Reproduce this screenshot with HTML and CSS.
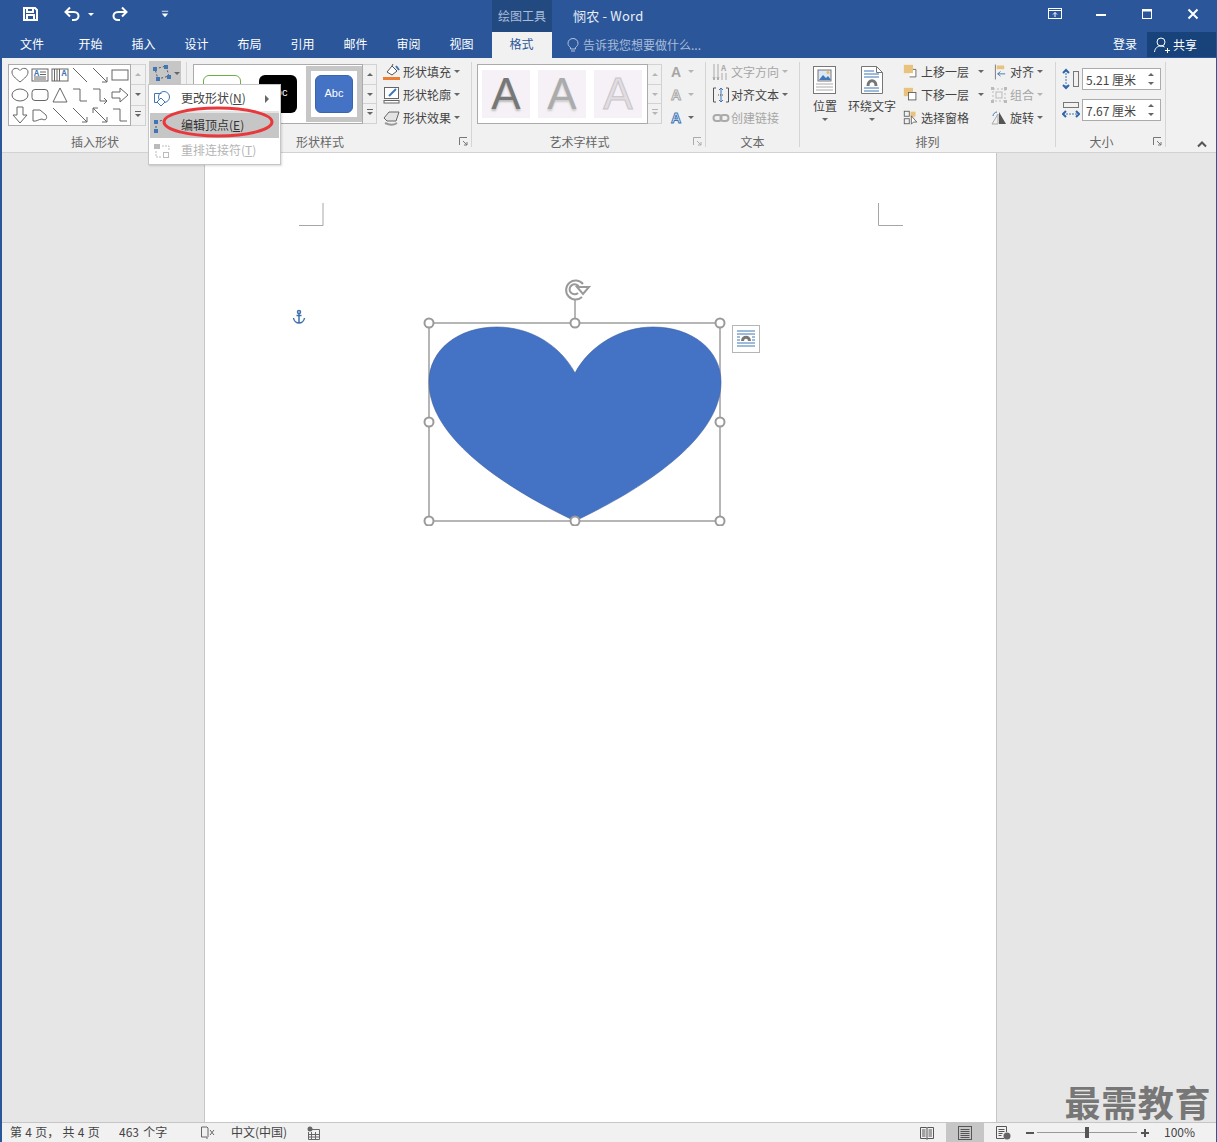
FILE: index.html
```html
<!DOCTYPE html>
<html>
  <head>
    <title>悯农 - Word</title>
    <meta charset="utf-8" />
    <link rel="stylesheet" href="styles.css">
  </head>
  <body>
    <div class="app">
      <div class="titlebar">
        <div class="qat">
          <svg class="qat-save" width="20" height="20" viewBox="0 0 20 20" fill="none" stroke="#fff" stroke-width="2"><path d="M4 4h11l2 2v10H4z"/><path d="M7 4v4h6V4M7 16v-5h7v5"/></svg>
          <svg class="qat-undo" width="20" height="20" viewBox="0 0 20 20" fill="none" stroke="#fff" stroke-width="2"><path d="M4 8h8c6 0 6 8 0 8h-2"/><path d="M8 3.5 3.500 8 8 12.500"/></svg>
          <span class="caret caret-white qat-caret"></span>
          <svg class="qat-redo" width="20" height="20" viewBox="0 0 20 20" fill="none" stroke="#fff" stroke-width="2"><path d="M16 8H8c-6 0-6 8 0 8h2"/><path d="M12 3.500 16.500 8 12 12.500"/></svg>
          <svg class="qat-more" width="8" height="8" viewBox="0 0 10 10" fill="#fff"><rect x="1" y="1" width="8" height="1"/><path d="M1 4.500h8L5 9z"/></svg>
        </div>
        <div class="context-tab">绘图工具</div>
        <div class="doc-title">悯农 - Word</div>
        <div class="win-btns">
          <div class="win-btn"><svg width="14" height="12" viewBox="0 0 14 12" fill="none" stroke="#fff"><rect x=".5" y=".5" width="13" height="10"/><path d="M1 2.500h12M7 9V4.500M5 6.500l2-2 2 2"/></svg></div>
          <div class="win-btn"><svg width="12" height="12" viewBox="0 0 12 12" fill="#fff"><rect x="1" y="6" width="10" height="2"/></svg></div>
          <div class="win-btn"><svg width="12" height="12" viewBox="0 0 12 12" fill="none" stroke="#fff"><rect x="1.500" y="1.500" width="9" height="9"/><path d="M1 2.500h10" stroke-width="2"/></svg></div>
          <div class="win-btn"><svg width="12" height="12" viewBox="0 0 12 12" stroke="#fff" stroke-width="2"><path d="M1.500 1.500l9 9M10.500 1.500l-9 9"/></svg></div>
        </div>
      </div>

      <div class="tabs">
        <div class="tab tab-file">文件</div>
        <div class="tab">开始</div>
        <div class="tab">插入</div>
        <div class="tab">设计</div>
        <div class="tab">布局</div>
        <div class="tab">引用</div>
        <div class="tab">邮件</div>
        <div class="tab">审阅</div>
        <div class="tab">视图</div>
        <div class="tab tab-active">格式</div>
        <div class="tell-me">
          <svg width="14" height="16" viewBox="0 0 14 16" fill="none" stroke="#b4c4dc"><path d="M4.500 10.500C3 9.500 2 8 2 6.200 2 3.500 4.200 1.500 7 1.500s5 2 5 4.700c0 1.800-1 3.300-2.500 4.300v1.500h-5z"/><path d="M5 14h4"/></svg>
          <span>告诉我您想要做什么...</span>
        </div>
        <div class="login">登录</div>
        <div class="share">
          <svg width="18" height="18" viewBox="0 0 18 18" fill="none" stroke="#fff"><circle cx="8" cy="6" r="4"/><path d="M1.500 16c.5-4 3-6 6.500-6 1.500 0 2.500.3 3.500 1M12 14.500h5M14.500 12v5"/></svg>
          <span>共享</span>
        </div>
      </div>

      <div class="ribbon">
        <div class="group group-shapes">
          <div class="group-body">
            <div class="shape-gallery">
              <svg viewBox="0 0 18 18"><path d="M9 16C4 12 1 9.500 1 6c0-4 5.500-5 8-1.500C11.500 1 17 2 17 6c0 3.500-3 6-8 10z"/></svg>
              <svg viewBox="0 0 18 18"><rect x="1" y="3" width="16" height="12"/><path d="M9 6h6M9 8.500h6M3 11h12M3 13h12"/><text x="3" y="10" class="svg-a">A</text></svg>
              <svg viewBox="0 0 18 18"><rect x="1" y="3" width="16" height="12"/><path d="M3.500 3v12M6 3v12M8.500 3v12"/><text x="10.500" y="10" class="svg-a">A</text></svg>
              <svg viewBox="0 0 18 18"><path d="M2 2l14 14"/></svg>
              <svg viewBox="0 0 18 18"><path d="M2 2l14 14M11 16h5v-5"/></svg>
              <svg viewBox="0 0 18 18"><rect x="1" y="4" width="16" height="10"/></svg>
              <svg viewBox="0 0 18 18"><ellipse cx="9" cy="9" rx="8" ry="6"/></svg>
              <svg viewBox="0 0 18 18"><rect x="1" y="3.500" width="16" height="11" rx="3"/></svg>
              <svg viewBox="0 0 18 18"><path d="M9 2l7 14H2z"/></svg>
              <svg viewBox="0 0 18 18"><path d="M2 3h7v12h7"/></svg>
              <svg viewBox="0 0 18 18"><path d="M2 3h7v12h7M13 12l3 3-3 3"/></svg>
              <svg viewBox="0 0 18 18"><path d="M1 6h8V2l8 7-8 7v-4H1z"/></svg>
              <svg viewBox="0 0 18 18"><path d="M6 1h6v8h4l-7 8-7-8h4z"/></svg>
              <svg viewBox="0 0 18 18"><path d="M2 4h7l6 5c2 4-1 6-4 4-3 0-6 3-9 2z"/></svg>
              <svg viewBox="0 0 18 18"><path d="M2 2l14 14"/></svg>
              <svg viewBox="0 0 18 18"><path d="M2 2l14 14M11 16h5v-5"/></svg>
              <svg viewBox="0 0 18 18"><path d="M2 2l14 14M7 2H2v5M11 16h5v-5"/></svg>
              <svg viewBox="0 0 18 18"><path d="M2 3h7v12h7"/></svg>
            </div>
            <div class="scroll scroll-shapes">
              <div class="scroll-btn"><span class="caret caret-up caret-off"></span></div>
              <div class="scroll-btn"><span class="caret"></span></div>
              <div class="scroll-btn"><span class="caret caret-more"></span></div>
            </div>
            <div class="edit-shape-btn">
              <svg width="20" height="18" viewBox="0 0 20 18" fill="none" stroke="#555"><path d="M3 5l11-3 3 10-11 3z" stroke-dasharray="2 2"/><g fill="#3f76b8" stroke="none"><rect x="1" y="3" width="4" height="4"/><rect x="12" y="1" width="4" height="4"/><rect x="15" y="11" width="4" height="4"/><rect x="4" y="13" width="4" height="4"/></g></svg>
              <span class="caret"></span>
            </div>
          </div>
          <div class="group-label">插入形状</div>
        </div>

        <div class="group group-styles">
          <div class="group-body">
            <div class="style-gallery">
              <div class="style-item style-green"></div>
              <div class="style-item style-black">Abc</div>
              <div class="style-frame"><div class="style-item style-blue">Abc</div></div>
            </div>
            <div class="scroll scroll-styles">
              <div class="scroll-btn"><span class="caret caret-up"></span></div>
              <div class="scroll-btn"><span class="caret"></span></div>
              <div class="scroll-btn"><span class="caret caret-more"></span></div>
            </div>
            <div class="cmds">
              <div class="cmd">
                <svg width="18" height="18" viewBox="0 0 18 18" fill="none" stroke="#555"><path d="M4 9l5-6 5 5-5 4z" fill="#fff"/><path d="M9 3l1-2" /><path d="M13 3l3 4" stroke="#3f76b8" stroke-width="2"/><rect x="0" y="14" width="17" height="3" fill="#ed7d31" stroke="none"/></svg>
                <span>形状填充</span><span class="caret"></span>
              </div>
              <div class="cmd">
                <svg width="18" height="18" viewBox="0 0 18 18" fill="none" stroke="#666"><rect x="1.500" y="1.500" width="14" height="11" fill="#fff"/><path d="M6 10l7-7" stroke="#3f76b8" stroke-width="2"/><rect x="1" y="14.500" width="15" height="2.500" fill="#fff"/></svg>
                <span>形状轮廓</span><span class="caret"></span>
              </div>
              <div class="cmd">
                <svg width="18" height="18" viewBox="0 0 18 18" stroke="#666"><path d="M1 9l5-6h10l-3 9H4z" fill="#e4e4e4"/><path d="M2 14c4 2 9 2 12 0" fill="none" stroke="#999" stroke-width="2"/></svg>
                <span>形状效果</span><span class="caret"></span>
              </div>
            </div>
          </div>
          <div class="group-label">形状样式</div>
          <svg class="launcher" width="9" height="9" viewBox="0 0 9 9" fill="none" stroke="#777"><path d="M.5 8V.5H8M4 4l4 4M8 5v3H5"/></svg>
        </div>

        <div class="group group-wordart">
          <div class="group-body">
            <div class="art-gallery">
              <div class="art-item art-dark">A</div>
              <div class="art-item art-mid">A</div>
              <div class="art-item art-light">A</div>
            </div>
            <div class="scroll scroll-art">
              <div class="scroll-btn"><span class="caret caret-up caret-off"></span></div>
              <div class="scroll-btn"><span class="caret caret-off"></span></div>
              <div class="scroll-btn"><span class="caret caret-more caret-off"></span></div>
            </div>
            <div class="art-cmds">
              <div class="art-cmd"><span class="art-a art-a-gray">A</span><span class="caret caret-off"></span></div>
              <div class="art-cmd"><span class="art-a art-a-outline">A</span><span class="caret caret-off"></span></div>
              <div class="art-cmd"><span class="art-a art-a-blue">A</span><span class="caret"></span></div>
            </div>
          </div>
          <div class="group-label">艺术字样式</div>
          <svg class="launcher launcher-off" width="9" height="9" viewBox="0 0 9 9" fill="none" stroke="#aaa"><path d="M.5 8V.5H8M4 4l4 4M8 5v3H5"/></svg>
        </div>

        <div class="group group-text">
          <div class="group-body">
            <div class="cmds">
              <div class="cmd cmd-off">
                <svg width="18" height="18" viewBox="0 0 18 18" fill="none" stroke="#aaa"><path d="M2 1v16M6 1v16M10 10v7M14 10v7M1 14l1 3 1-3M5 14l1 3 1-3"/><text x="9" y="8" class="svg-a svg-a-off">A</text></svg>
                <span>文字方向</span><span class="caret caret-off"></span>
              </div>
              <div class="cmd">
                <svg width="18" height="18" viewBox="0 0 18 18" fill="none" stroke="#555"><path d="M4 2H1.500v14H4M14 2h2.500v14H14"/><path d="M9 2v14M7 4l2-2 2 2M7 14l2 2 2-2" stroke="#3f76b8"/><path d="M6 9h6" stroke-dasharray="1 1"/></svg>
                <span>对齐文本</span><span class="caret"></span>
              </div>
              <div class="cmd cmd-off">
                <svg width="18" height="18" viewBox="0 0 18 18" fill="none" stroke="#aaa" stroke-width="2"><rect x="1.500" y="6" width="8" height="6" rx="3"/><rect x="8.500" y="6" width="8" height="6" rx="3"/></svg>
                <span>创建链接</span>
              </div>
            </div>
          </div>
          <div class="group-label">文本</div>
        </div>

        <div class="group group-arrange">
          <div class="group-body">
            <div class="big-btn big-position">
              <svg width="26" height="30" viewBox="0 0 26 30" fill="#fff" stroke="#777"><rect x="1.500" y="1.500" width="22" height="27"/><rect x="6" y="5" width="13" height="11" fill="#dbe7f4" stroke="#777"/><path d="M7 15l4-5 3 3 2-2 3 4z" fill="#3f76b8" stroke="none"/><circle cx="16" cy="7.500" r="1.500" fill="#e8b960" stroke="none"/><path d="M4 19h17M4 22h17M4 25h17" stroke="#aaa"/></svg>
              <span>位置</span>
              <span class="caret"></span>
            </div>
            <div class="big-btn big-wrap">
              <svg width="24" height="30" viewBox="0 0 24 30" fill="#fff" stroke="#777"><path d="M1.500 1.500h15l6 6v21h-21z"/><path d="M16.500 1.500v6h6" fill="none"/><path d="M4 6h10M4 9h15M4 12h15M4 23h15M4 26h15" stroke="#3f76b8"/><path d="M8 21c0-7 8-7 8 0" fill="none" stroke="#777" stroke-width="3"/></svg>
              <span>环绕文字</span>
              <span class="caret"></span>
            </div>
            <div class="cmds cmds-layer">
              <div class="cmd">
                <svg width="15" height="15" viewBox="0 0 18 18" fill="none" stroke="#555"><path d="M8 6.500h7.500v9H8" fill="#fff"/><rect x="1" y="1" width="11" height="10" fill="#e9c27d" stroke="none"/></svg>
                <span>上移一层</span><span class="caret caret-far"></span>
              </div>
              <div class="cmd">
                <svg width="15" height="15" viewBox="0 0 18 18" fill="none" stroke="#555"><rect x="1" y="1" width="11" height="10" fill="#e9c27d" stroke="none"/><rect x="6.500" y="6.500" width="9" height="9" fill="#fff"/></svg>
                <span>下移一层</span><span class="caret caret-far"></span>
              </div>
              <div class="cmd">
                <svg width="15" height="15" viewBox="0 0 18 18" fill="none" stroke="#555"><rect x="1.500" y="1.500" width="6" height="6"/><rect x="1.500" y="10.500" width="6" height="6"/><rect x="9" y="2" width="6" height="6" fill="#e9c27d" stroke="none"/><path d="M10 7v10l2.500-2.500h4z" fill="#fff"/></svg>
                <span>选择窗格</span>
              </div>
            </div>
            <div class="cmds cmds-align">
              <div class="cmd">
                <svg width="13" height="18" viewBox="0 0 14 18" fill="none" stroke="#777"><path d="M1.500 1v16"/><rect x="3" y="2" width="8" height="4" fill="#e9c27d" stroke="none"/><path d="M12 11H4M7 8.500 4 11l3 2.500" stroke="#3f76b8"/></svg>
                <span>对齐</span><span class="caret"></span>
              </div>
              <div class="cmd cmd-off">
                <svg class="ic-wide" width="16" height="18" viewBox="0 0 16 18" fill="none" stroke="#bbb"><rect x="2" y="3" width="12" height="12" stroke-dasharray="2 2"/><rect x="5" y="6" width="6" height="6"/><g fill="#bbb" stroke="none"><rect x="0" y="1" width="3" height="3"/><rect x="13" y="1" width="3" height="3"/><rect x="0" y="14" width="3" height="3"/><rect x="13" y="14" width="3" height="3"/></g></svg>
                <span>组合</span><span class="caret caret-off"></span>
              </div>
              <div class="cmd">
                <svg class="ic-wide" width="16" height="18" viewBox="0 0 16 18" fill="none" stroke="#aaa"><path d="M1 15L7 5v10z"/><path d="M8 15V3l7 12z" fill="#555" stroke="none"/><path d="M2 7c0-2 2-4 4-4" stroke="#3f76b8"/></svg>
                <span>旋转</span><span class="caret"></span>
              </div>
            </div>
          </div>
          <div class="group-label">排列</div>
        </div>

        <div class="group group-size">
          <div class="group-body">
            <div class="size-rows">
              <div class="size-row">
                <svg width="18" height="22" viewBox="0 0 18 22" fill="none" stroke="#777"><rect x="11.500" y="3.500" width="5" height="15"/><path d="M4 2v18" stroke="#3f76b8" stroke-dasharray="2 1"/><path d="M1 5l3-3 3 3M1 17l3 3 3-3" stroke="#2f66a8" stroke-width="2"/></svg>
                <div class="size-input">
                  <span>5.21 厘米</span>
                  <div class="spin"><span class="caret caret-up"></span><span class="caret"></span></div>
                </div>
              </div>
              <div class="size-row">
                <svg width="18" height="22" viewBox="0 0 18 22" fill="none" stroke="#777"><rect x="1.500" y="3.500" width="15" height="5"/><path d="M1 15h16" stroke="#3f76b8" stroke-dasharray="2 1"/><path d="M4 12l-3 3 3 3M14 12l3 3-3 3" stroke="#2f66a8" stroke-width="2"/></svg>
                <div class="size-input">
                  <span>7.67 厘米</span>
                  <div class="spin"><span class="caret caret-up"></span><span class="caret"></span></div>
                </div>
              </div>
            </div>
          </div>
          <div class="group-label">大小</div>
          <svg class="launcher" width="9" height="9" viewBox="0 0 9 9" fill="none" stroke="#777"><path d="M.5 8V.5H8M4 4l4 4M8 5v3H5"/></svg>
        </div>

        <svg class="collapse" width="12" height="8" viewBox="0 0 12 8" fill="none" stroke="#555" stroke-width="2"><path d="M2 6.500l4-4 4 4"/></svg>
      </div>

      <div class="workspace">
        <div class="page">
          <svg class="crop crop-left" width="25" height="24" viewBox="0 0 25 24" fill="none" stroke="#a6a6a6"><path d="M24 0v22.500H0"/></svg>
          <svg class="crop crop-right" width="25" height="24" viewBox="0 0 25 24" fill="none" stroke="#a6a6a6"><path d="M.5 0v22.500H25"/></svg>
          <svg class="anchor" width="14" height="16" viewBox="0 0 14 16" fill="none" stroke="#3f6fae" stroke-width="1.500"><circle cx="7" cy="3" r="1.500"/><path d="M7 4.500V14M4.500 6.500h5M1.500 9c.5 3 3 5 5.500 5s5-2 5.500-5"/></svg>

          <svg class="heart" width="310" height="260" viewBox="0 0 310 260" fill="none">
            <path d="M156 57V34" stroke="#8f8f8f" stroke-width="1.300"/>
            <rect x="10" y="57" width="291" height="198" stroke="#8f8f8f" stroke-width="1.300"/>
            <path d="M156 107C141 79 111 61 78 61 39 61 10 84 10 116c0 58 81 108 146 139 65-31 146-81 146-139 0-32-29-55-68-55-32 0-63 18-78 46z" fill="#4472c4" stroke="#3a5f9e" stroke-width=".6"/>
            <g fill="#fff" stroke="#9a9a9a" stroke-width="2">
              <circle cx="10" cy="57" r="4.500"/><circle cx="156" cy="57" r="4.500"/><circle cx="301" cy="57" r="4.500"/>
              <circle cx="10" cy="156" r="4.500"/><circle cx="301" cy="156" r="4.500"/>
              <circle cx="10" cy="255" r="4.500"/><circle cx="156" cy="255" r="4.500"/><circle cx="301" cy="255" r="4.500"/>
            </g>
            <g stroke="#9a9a9a" stroke-width="2">
              <path d="M164 18a9.500 9.500 0 1 0-1 13"/>
              <path d="M160 21a5 5 0 1 0-1 6"/>
              <path d="M158 21h12l-6 7z" fill="#fff"/>
            </g>
          </svg>

          <div class="layout-btn">
            <svg width="22" height="22" viewBox="0 0 22 22" fill="none" stroke="#3f76b8"><path d="M2 3h18M2 6h18M2 9h3M17 9h3M2 12h3M17 12h3M2 15h18M2 18h18"/><path d="M7.500 13c0-5 7-5 7 0" stroke="#777" stroke-width="3"/></svg>
          </div>
        </div>
        <div class="watermark">最需教育</div>
      </div>

      <div class="statusbar">
        <span class="st-pages">第 4 页， 共 4 页</span>
        <span class="st-words">463 个字</span>
        <svg class="st-proof" width="15" height="15" viewBox="0 0 15 15" fill="none" stroke="#666"><path d="M7 2H1.500v10H7V14M7 2l1 1v9"/><path d="M10 5l4 5M14 5l-4 5"/></svg>
        <span class="st-lang">中文(中国)</span>
        <svg class="st-macro" width="14" height="14" viewBox="0 0 14 14" fill="none" stroke="#666"><circle cx="3" cy="3" r="2.500" fill="#666" stroke="none"/><path d="M5 3.500h7.500v10h-11V6M1.500 8.500h11M1.500 11h11M4.500 6v7.500M8.500 6v7.500"/></svg>
        <div class="st-right">
          <div class="view-btn">
            <svg width="14" height="14" viewBox="0 0 14 14" fill="none" stroke="#555"><path d="M.5 1.500h6l.5 1 .5-1h6v11h-6l-.5 1-.5-1h-6zM7 2.500v10M2 4h3.500M2 6h3.500M2 8h3.500M2 10h3.500M8.500 4H12M8.500 6H12M8.500 8H12M8.500 10H12"/></svg>
          </div>
          <div class="view-btn view-btn-on">
            <svg width="14" height="14" viewBox="0 0 14 14" fill="none" stroke="#555"><rect x=".5" y=".5" width="13" height="13"/><path d="M2.500 3.500h9M2.500 5.500h9M2.500 7.500h9M2.500 9.500h9M2.500 11.500h9"/></svg>
          </div>
          <div class="view-btn">
            <svg width="15" height="14" viewBox="0 0 15 14" fill="none" stroke="#555"><path d="M8 12.500H.5V.5h10V6M2.500 3.500h6M2.500 5.500h6M2.500 7.500h4M2.500 9.500h3"/><circle cx="11" cy="10" r="3.500" fill="#666" stroke="none"/></svg>
          </div>
          <div class="zoom-minus"></div>
          <div class="zoom-track"><div class="zoom-thumb"></div></div>
          <div class="zoom-plus"></div>
          <span class="zoom-pct">100%</span>
        </div>
      </div>

      <div class="menu">
        <div class="menu-item">
          <svg width="18" height="18" viewBox="0 0 18 18" fill="none" stroke="#3f76b8"><circle cx="11" cy="7" r="5.500"/><path d="M1.500 3.500h7" /><path d="M1.500 3.500v9h3"/><path d="M8 8l4 4-4 4-4-4z" fill="#fff"/></svg>
          <span class="menu-text">更改形状(<u>N</u>)</span>
          <span class="menu-arrow"></span>
        </div>
        <div class="menu-sep"></div>
        <div class="menu-item menu-item-on">
          <svg width="18" height="18" viewBox="0 0 18 18" fill="none" stroke="#555"><path d="M3 5l11-3M3 5v9" stroke-dasharray="2 2"/><g fill="#3f76b8" stroke="none"><rect x="1" y="3" width="4" height="4"/><rect x="1" y="12" width="4" height="4"/></g></svg>
          <span class="menu-text">编辑顶点(<u>E</u>)</span>
        </div>
        <div class="menu-item menu-item-off">
          <svg width="18" height="18" viewBox="0 0 18 18" fill="none" stroke="#bbb"><rect x="1" y="2" width="6" height="5" fill="#bbb" stroke="none"/><path d="M9 4h7v4M3 9v6h6" stroke-dasharray="2 1"/><rect x="10.500" y="10.500" width="5" height="5"/></svg>
          <span class="menu-text">重排连接符(<u>T</u>)</span>
        </div>
      </div>
      <svg class="red-ring" width="114" height="34" viewBox="0 0 114 34" fill="none"><ellipse cx="57" cy="16" rx="54" ry="14" stroke="#e9383c" stroke-width="3"/></svg>
    </div>
  </body>
</html>
```

FILE: styles.css
```css
* {
  box-sizing: border-box;
}

body {
  margin: 0;
  font-family: "Noto Sans CJK SC", "Noto Sans", sans-serif;
  font-size: 12px;
  color: #444;
}

.app {
  position: relative;
  display: flex;
  flex-direction: column;
  width: 1217px;
  height: 1142px;
  overflow: hidden;
  border-left: 2px solid #2b579a;
  border-right: 1px solid #2b579a;
  background: #e6e6e6;
}

/* carets */
.caret {
  display: inline-block;
  width: 0;
  height: 0;
  border-left: 3px solid transparent;
  border-right: 3px solid transparent;
  border-top: 3px solid #666;
}

.caret-up {
  border-top: none;
  border-bottom: 3px solid #666;
}

.caret-off {
  border-top-color: #b5b5b5;
  border-bottom-color: #b5b5b5;
}

.caret-white {
  border-top-color: #fff;
}

.caret-more {
  position: relative;
}

.caret-more::before {
  content: "";
  position: absolute;
  top: -6px;
  left: -3px;
  width: 6px;
  height: 1px;
  background: #666;
}

.caret-more.caret-off::before {
  background: #b5b5b5;
}

/* title bar */
.titlebar {
  display: flex;
  flex: 0 0 32px;
  background: #2b579a;
  color: #fff;
}

.qat {
  display: flex;
  flex: 0 0 490px;
  align-items: center;
  padding-left: 18px;
  height: 28px;
}

.qat-undo {
  margin-left: 22px;
}

.qat-caret {
  margin-left: 6px;
}

.qat-redo {
  margin-left: 16px;
}

.qat-more {
  margin-left: 31px;
}

.context-tab {
  flex: 0 0 60px;
  background: #234a80;
  color: #a9bcd8;
  text-align: center;
  line-height: 31px;
}

.doc-title {
  padding-left: 21px;
  line-height: 31px;
  font-size: 13px;
  letter-spacing: 0.2px;
  color: #e8eef6;
}

.win-btns {
  display: flex;
  margin-left: auto;
  padding-bottom: 4px;
}

.win-btn {
  display: flex;
  align-items: center;
  justify-content: center;
  width: 46px;
}

/* tabs */
.tabs {
  display: flex;
  flex: 0 0 26px;
  background: #2b579a;
  color: #fff;
  line-height: 24px;
}

.tab {
  width: 53px;
  text-align: center;
}

.tab-file {
  width: 60px;
  margin-right: 2px;
}

.tab-active {
  width: 60px;
  margin-left: 4px;
  padding-right: 1px;
  background: #f1f1f1;
  color: #2b579a;
}

.tell-me {
  display: flex;
  align-items: center;
  gap: 3px;
  padding-left: 14px;
  color: #a9bcd8;
}

.login {
  margin-left: auto;
  margin-right: 10px;
}

.share {
  display: flex;
  align-items: center;
  gap: 2px;
  width: 69px;
  height: 25px;
  padding-left: 6px;
  background: #17427a;
}

/* ribbon */
.ribbon {
  display: flex;
  flex: 0 0 95px;
  padding-top: 4px;
  background: #f1f1f1;
  border-bottom: 1px solid #d2d2d2;
}

.group {
  position: relative;
  display: flex;
  flex-direction: column;
  height: 85px;
  border-right: 1px solid #d5d5d5;
}

.group-shapes {
  width: 185px;
}

.group-styles {
  width: 285px;
}

.group-wordart {
  width: 234px;
}

.group-text {
  width: 94px;
}

.group-arrange {
  width: 256px;
}

.group-size {
  width: 110px;
}

.group-body {
  display: flex;
  flex: none;
  align-items: flex-start;
  height: 73px;
}

.group-label {
  flex: none;
  padding-right: 18px;
  color: #666;
  text-align: center;
  line-height: 14px;
}

.group-shapes .group-label {
  padding: 0 0 0 2px;
}

.group-text .group-label,
.group-arrange .group-label {
  padding-right: 0;
}

.launcher {
  position: absolute;
  right: 3px;
  bottom: 1px;
}

.collapse {
  align-self: flex-start;
  margin: 78px 0 0 30px;
}

/* galleries */
.shape-gallery {
  display: grid;
  grid-template-columns: repeat(6, 20px);
  grid-auto-rows: 20px;
  justify-content: center;
  align-content: center;
  width: 123px;
  height: 62px;
  margin: 2px 0 0 6px;
  background: #fff;
  border: 1px solid #ababab;
}

.shape-gallery svg {
  width: 18px;
  height: 18px;
  margin: 1px;
  fill: none;
  stroke: #666;
}

.svg-a {
  font-size: 8px;
  font-weight: 700;
  fill: #3f76b8;
  stroke: none;
}

.svg-a-off {
  fill: #aaa;
}

.scroll {
  display: flex;
  flex-direction: column;
  flex: 0 0 15px;
  margin-top: 2px;
}

.scroll-shapes {
  height: 62px;
}

.scroll-styles,
.scroll-art {
  flex-basis: 14px;
  height: 60px;
}

.scroll-btn {
  display: flex;
  flex: 1;
  align-items: center;
  justify-content: center;
  border: 1px solid #d2d2d2;
  border-left: none;
}

.scroll-btn + .scroll-btn {
  border-top: none;
}

.edit-shape-btn {
  display: flex;
  align-items: center;
  gap: 2px;
  width: 32px;
  height: 24px;
  margin: -1px 0 0 3px;
  padding-left: 3px;
  background: #c6c6c6;
}

.style-gallery {
  display: flex;
  align-items: center;
  width: 170px;
  height: 60px;
  margin: 2px 0 0 6px;
  padding-left: 9px;
  background: #fff;
  border: 1px solid #ababab;
}

.style-item {
  width: 38px;
  height: 38px;
  border-radius: 6px;
  font-family: "Liberation Sans", sans-serif;
  font-size: 11px;
  line-height: 34px;
  text-align: center;
  color: #fff;
}

.style-green {
  border: 1px solid #70ad47;
}

.style-black {
  margin-left: 18px;
  background: #000;
}

.style-frame {
  margin-left: 9px;
  padding: 4px;
  border: 5px solid #c6c6c6;
}

.style-blue {
  background: #4472c4;
  border: 1px solid #3a64ad;
}

.art-gallery {
  display: flex;
  gap: 8px;
  align-items: center;
  width: 171px;
  height: 60px;
  margin: 2px 0 0 5px;
  padding-left: 4px;
  background: #fff;
  border: 1px solid #ababab;
}

.art-item {
  width: 48px;
  height: 48px;
  background: #f5f1f6;
  font-family: "Liberation Sans", sans-serif;
  font-size: 44px;
  line-height: 48px;
  text-align: center;
}

.art-dark {
  color: #777;
  text-shadow: 0 2px 2px #bbb;
}

.art-mid {
  color: #ababab;
  text-shadow: 0 2px 2px #ccc;
}

.art-light {
  color: #e2dde2;
  -webkit-text-stroke: 1px #c9c5c9;
}

.art-cmds {
  display: flex;
  flex-direction: column;
  margin: -2px 0 0 6px;
}

.art-cmd {
  display: flex;
  align-items: center;
  gap: 5px;
  height: 23px;
  padding-left: 1px;
}

.art-a {
  width: 14px;
  font-family: "Liberation Sans", sans-serif;
  font-size: 14px;
  font-weight: 700;
  text-align: center;
}

.art-a-gray {
  color: #a6a6a6;
}

.art-a-outline {
  color: #f1f1f1;
  -webkit-text-stroke: 1px #aaa;
}

.art-a-blue {
  color: #fff;
  -webkit-text-stroke: 1px #3f76b8;
}

/* command rows */
.cmds {
  display: flex;
  flex-direction: column;
  margin: -2px 0 0 6px;
}

.cmd {
  display: flex;
  align-items: center;
  height: 23px;
  white-space: nowrap;
}

.cmd svg {
  flex: none;
  margin-right: 2px;
}

.cmd .caret {
  margin-left: 3px;
}

.cmd-off {
  color: #a6a6a6;
}

.group-text .cmd svg {
  margin-right: 1px;
}

.cmds-layer {
  margin-left: 7px;
}

.cmds-layer .cmd svg {
  margin-right: 3px;
}

.cmds-layer .caret-far {
  margin-left: 9px;
}

.cmds-align {
  margin-left: 10px;
}

.cmds-align .cmd svg {
  margin-right: 3px;
}

.cmds-align .ic-wide {
  margin-left: -3px;
}

.big-btn {
  display: flex;
  flex-direction: column;
  align-items: center;
  margin-top: 3px;
}

.big-btn span {
  margin-top: 3px;
  line-height: 16px;
}

.big-btn .caret {
  margin-top: 4px;
  line-height: 0;
}

.big-position {
  width: 26px;
  margin-left: 12px;
}

.big-wrap {
  width: 48px;
  margin-left: 10px;
}

/* size group */
.size-rows {
  display: flex;
  flex-direction: column;
  gap: 9px;
  margin: 6px 0 0 6px;
}

.size-row {
  display: flex;
  align-items: center;
  gap: 2px;
}

.size-input {
  display: flex;
  align-items: center;
  justify-content: space-between;
  width: 79px;
  height: 22px;
  padding: 0 6px 0 3px;
  background: #fff;
  border: 1px solid #ababab;
}

.spin {
  display: flex;
  flex-direction: column;
  gap: 6px;
}

/* document */
.workspace {
  position: relative;
  flex: 1;
  padding-left: 202px;
}

.page {
  position: relative;
  width: 793px;
  height: 100%;
  background: #fff;
  border-left: 1px solid #c6c6c6;
  border-right: 1px solid #c6c6c6;
}

.crop {
  position: absolute;
  top: 50px;
}

.crop-left {
  left: 94px;
}

.crop-right {
  left: 673px;
}

.anchor {
  position: absolute;
  left: 87px;
  top: 156px;
}

.heart {
  position: absolute;
  left: 214px;
  top: 113px;
}

.layout-btn {
  position: absolute;
  left: 527px;
  top: 172px;
  display: flex;
  align-items: center;
  justify-content: center;
  width: 28px;
  height: 28px;
  background: #fff;
  border: 1px solid #b5b5b5;
}

.watermark {
  position: absolute;
  right: 5px;
  bottom: 1px;
  font-size: 36px;
  font-weight: 700;
  line-height: 40px;
  letter-spacing: 0.6px;
  color: #777;
}

/* status bar */
.statusbar {
  display: flex;
  flex: 0 0 20px;
  align-items: center;
  background: #f1f1f1;
  border-top: 1px solid #c6c6c6;
  white-space: nowrap;
}

.statusbar span {
  margin-top: -2px;
}

.st-pages {
  margin-left: 8px;
  width: 109px;
  word-spacing: 0.6px;
}

.st-words {
  width: 81px;
  word-spacing: 1.5px;
}

.st-proof {
  margin-right: 16px;
}

.st-lang {
  width: 76px;
}

.st-right {
  display: flex;
  align-items: center;
  margin-left: auto;
  height: 100%;
}

.view-btn {
  display: flex;
  align-items: center;
  justify-content: center;
  width: 38px;
  height: 100%;
}

.view-btn-on {
  background: #c6c6c6;
}

.zoom-minus,
.zoom-plus {
  position: relative;
  width: 8px;
  height: 2px;
  margin-left: 4px;
  background: #555;
}

.zoom-minus {
  margin-right: 3px;
}

.zoom-plus::after {
  content: "";
  position: absolute;
  left: 3px;
  top: -3px;
  width: 2px;
  height: 8px;
  background: #555;
}

.zoom-track {
  position: relative;
  width: 100px;
  height: 1px;
  background: #999;
}

.zoom-thumb {
  position: absolute;
  left: 48px;
  top: -5px;
  width: 4px;
  height: 11px;
  background: #555;
}

.zoom-pct {
  width: 67px;
  padding-left: 15px;
}

/* context menu */
.menu {
  position: absolute;
  left: 146px;
  top: 84px;
  width: 133px;
  height: 81px;
  padding: 1px;
  background: #fff;
  border: 1px solid #c6c6c6;
  box-shadow: 1px 1px 2px rgba(0, 0, 0, 0.15);
}

.menu-item {
  display: flex;
  align-items: center;
  gap: 10px;
  height: 25px;
  padding-left: 3px;
  white-space: nowrap;
}

.menu-text {
  margin-top: -2px;
}

.menu-item-on {
  background: #c6c6c6;
  color: #333;
}

.menu-item-off {
  color: #b5b5b5;
}

.menu-sep {
  height: 2px;
  margin-left: 26px;
  background: #e4e4e4;
}

.menu-arrow {
  width: 0;
  height: 0;
  margin-left: 9px;
  border-top: 4px solid transparent;
  border-bottom: 4px solid transparent;
  border-left: 4px solid #666;
}

.red-ring {
  position: absolute;
  left: 159px;
  top: 106px;
}
```
